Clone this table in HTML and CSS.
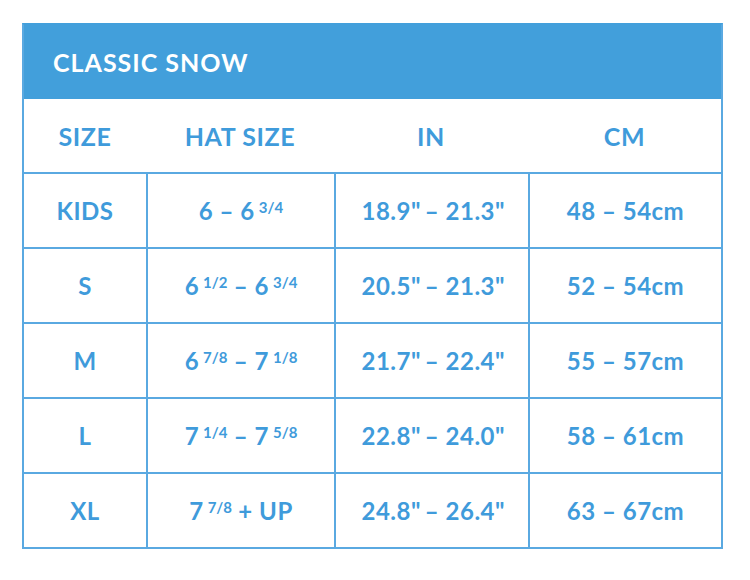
FILE: index.html
```html
<!DOCTYPE html>
<html>
<head>
<meta charset="utf-8">
<link rel="stylesheet" href="styles.css">
</head>
<body>
<div class="chart">
  <div class="title">CLASSIC SNOW</div>
  <div class="row head">
    <div class="cell"><span>SIZE</span></div>
    <div class="cell"><span>HAT SIZE</span></div>
    <div class="cell"><span>IN</span></div>
    <div class="cell"><span>CM</span></div>
  </div>
  <div class="row">
    <div class="cell"><span>KIDS</span></div>
    <div class="cell"><span>6 – 6<sup>3/4</sup></span></div>
    <div class="cell"><span>18.9<span class="q">"</span> – 21.3<span class="q">"</span></span></div>
    <div class="cell"><span>48 – 54cm</span></div>
  </div>
  <div class="row">
    <div class="cell"><span>S</span></div>
    <div class="cell"><span>6<sup>1/2</sup> – 6<sup>3/4</sup></span></div>
    <div class="cell"><span>20.5<span class="q">"</span> – 21.3<span class="q">"</span></span></div>
    <div class="cell"><span>52 – 54cm</span></div>
  </div>
  <div class="row">
    <div class="cell"><span>M</span></div>
    <div class="cell"><span>6<sup>7/8</sup> – 7<sup>1/8</sup></span></div>
    <div class="cell"><span>21.7<span class="q">"</span> – 22.4<span class="q">"</span></span></div>
    <div class="cell"><span>55 – 57cm</span></div>
  </div>
  <div class="row">
    <div class="cell"><span>L</span></div>
    <div class="cell"><span>7<sup>1/4</sup> – 7<sup>5/8</sup></span></div>
    <div class="cell"><span>22.8<span class="q">"</span> – 24.0<span class="q">"</span></span></div>
    <div class="cell"><span>58 – 61cm</span></div>
  </div>
  <div class="row">
    <div class="cell"><span>XL</span></div>
    <div class="cell"><span>7<sup>7/8</sup> + UP</span></div>
    <div class="cell"><span>24.8<span class="q">"</span> – 26.4<span class="q">"</span></span></div>
    <div class="cell"><span>63 – 67cm</span></div>
  </div>
</div>
</body>
</html>
```
FILE: styles.css
```css
html, body {
  margin: 0;
  padding: 0;
  background: #ffffff;
}
body {
  font-family: "Lato", "Liberation Sans", sans-serif;
  font-weight: 700;
  color: #3f9bdb;
}
.chart {
  margin: 23px 0 0 22px;
  width: 701px;
  box-sizing: border-box;
  border: 2px solid #5aa9e1;
  border-top-color: #429fdb;
}
.title {
  height: 74px;
  background: #429fdb;
  color: #ffffff;
  font-size: 25px;
  letter-spacing: 1px;
  display: flex;
  align-items: center;
  padding-left: 29px;
}
.row {
  display: grid;
  grid-template-columns: 122px 188px 194px 1fr;
  height: 75px;
  box-sizing: border-box;
  border-top: 2px solid #5aa9e1;
}
.row.head {
  height: 73px;
  border-top: 0;
}
.cell {
  display: flex;
  align-items: center;
  justify-content: center;
  font-size: 24px;
  letter-spacing: 0.5px;
  border-left: 2px solid #5aa9e1;
  white-space: nowrap;
}
.head .cell {
  font-size: 25px;
  letter-spacing: 0.6px;
  border-left: 0;
}
.cell:first-child {
  border-left: 0;
}
.q {
  letter-spacing: -2px;
}
sup {
  font-size: 15px;
  letter-spacing: 0;
  vertical-align: 7px;
  line-height: 0;
  margin-left: 4px;
}
```
